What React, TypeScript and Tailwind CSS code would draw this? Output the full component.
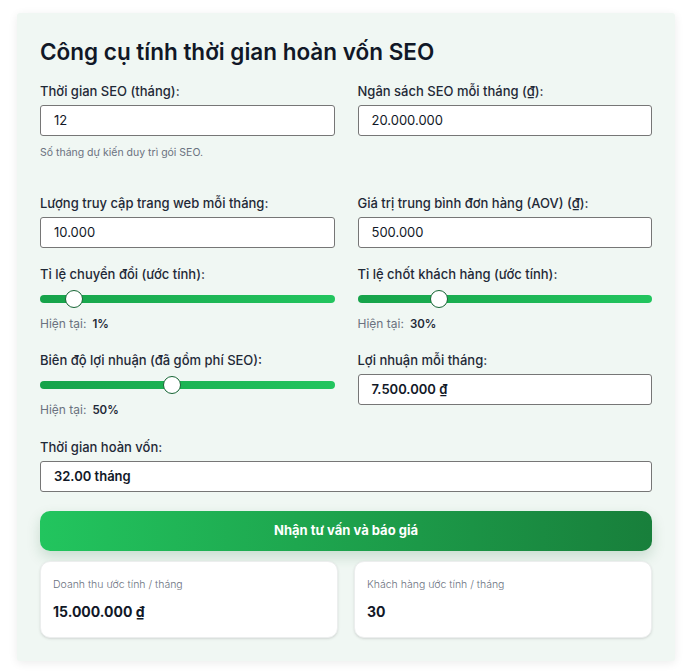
import type { ReactNode } from 'react'

function Field({ label, children, className = '' }: { label: string; children: ReactNode; className?: string }) {
  return (
    <div className={className}>
      <label className="mb-1 block text-[13px] leading-5 font-medium text-[#1f2937]">{label}</label>
      {children}
    </div>
  )
}

function Box({ value, bold = false }: { value: string; bold?: boolean }) {
  return (
    <div
      className={`flex h-[31px] items-center rounded-[3px] border border-[#767676] bg-white px-[13px] text-[13px] text-[#111827] ${
        bold ? 'font-semibold' : ''
      }`}
    >
      {value}
    </div>
  )
}

function Slider({ pos, current }: { pos: number; current: string }) {
  return (
    <div>
      <div className="relative mt-1.5 flex h-[18px] items-center">
        <div className="h-2 w-full rounded-full bg-gradient-to-r from-[#16a34a] to-[#22c55e]" />
        <div
          className="absolute top-0 h-[18px] w-[18px] -translate-x-1/2 rounded-full border border-[#166534] bg-white"
          style={{ left: pos }}
        />
      </div>
      <div className="mt-2 flex items-baseline gap-1.5 leading-4">
        <span className="text-[12px] text-[#6b7280]">Hiện tại:</span>
        <span className="text-[11.5px] font-semibold text-[#1f2937]">{current}</span>
      </div>
    </div>
  )
}

function Stat({ label, value }: { label: string; value: string }) {
  return (
    <div className="rounded-[10px] border border-[#eceeee] bg-white px-[12px] pt-[15px] pb-[14px] shadow-sm">
      <div className="text-[10.5px] leading-4 font-light text-[#6b7280]">{label}</div>
      <div className="mt-2 text-[14px] leading-[22px] font-bold text-[#111827]">{value}</div>
    </div>
  )
}

export default function App() {
  return (
    <div className="min-h-[671px] bg-white pt-[13px] font-['Inter',sans-serif]">
      <div className="ml-[17px] w-[658px] rounded-[3px] bg-[#f0f7f3] p-[23px] shadow-[0_2px_10px_rgba(0,0,0,0.08)]">
        <h1 className="mb-[13px] text-[22.5px] leading-8 font-semibold text-[#111827]">
          Công cụ tính thời gian hoàn vốn SEO
        </h1>

        <div className="grid grid-cols-2 gap-x-[23px]">
          <Field label="Thời gian SEO (tháng):">
            <Box value="12" />
            <p className="mt-[9px] text-[10.5px] leading-4 text-[#6b7280]">Số tháng dự kiến duy trì gói SEO.</p>
          </Field>
          <Field label="Ngân sách SEO mỗi tháng (₫):">
            <Box value="20.000.000" />
          </Field>

          <Field label="Lượng truy cập trang web mỗi tháng:" className="mt-8">
            <Box value="10.000" />
          </Field>
          <Field label="Giá trị trung bình đơn hàng (AOV) (₫):" className="mt-8">
            <Box value="500.000" />
          </Field>

          <Field label="Tỉ lệ chuyển đổi (ước tính):" className="mt-4">
            <Slider pos={34} current="1%" />
          </Field>
          <Field label="Tỉ lệ chốt khách hàng (ước tính):" className="mt-4">
            <Slider pos={81} current="30%" />
          </Field>

          <Field label="Biên độ lợi nhuận (đã gồm phí SEO):" className="mt-[18px]">
            <Slider pos={132} current="50%" />
          </Field>
          <Field label="Lợi nhuận mỗi tháng:" className="mt-[18px]">
            <Box value="7.500.000 ₫" bold />
          </Field>

          <Field label="Thời gian hoàn vốn:" className="col-span-2 mt-[19px]">
            <Box value="32.00 tháng" bold />
          </Field>
        </div>

        <button className="mt-[19px] flex h-10 w-full items-center justify-center rounded-[10px] bg-gradient-to-r from-[#22c55e] to-[#187f3b] text-[13px] font-bold text-white shadow-[0_6px_14px_rgba(22,101,52,0.18)]">
          Nhận tư vấn và báo giá
        </button>

        <div className="mt-2.5 grid grid-cols-2 gap-4">
          <Stat label="Doanh thu ước tính / tháng" value="15.000.000 ₫" />
          <Stat label="Khách hàng ước tính / tháng" value="30" />
        </div>
      </div>
    </div>
  )
}
